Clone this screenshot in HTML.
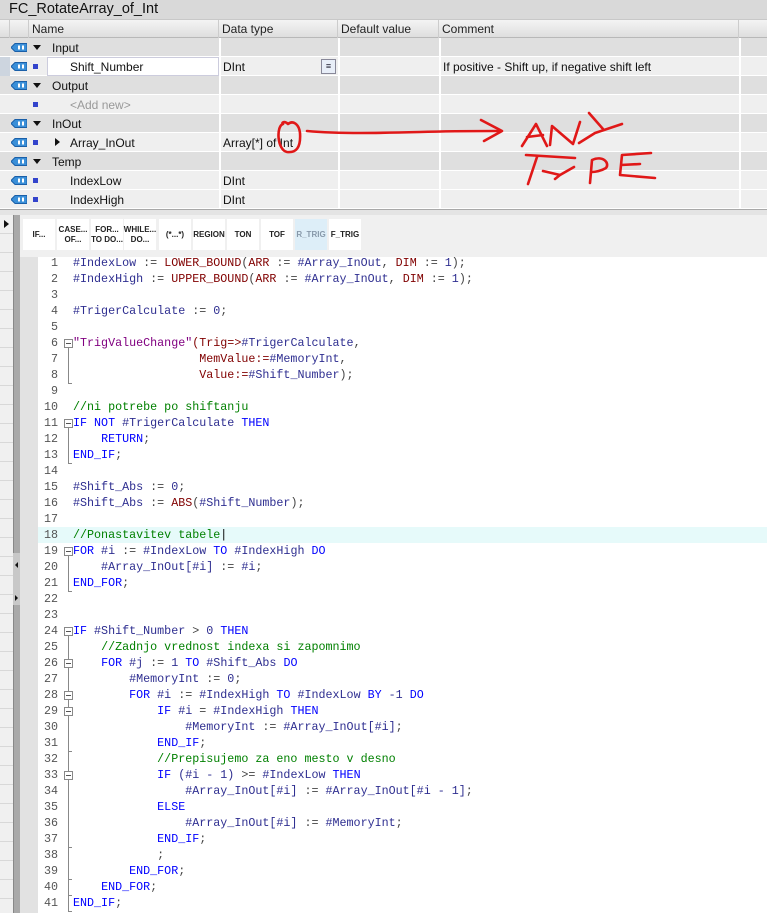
<!DOCTYPE html>
<html><head><meta charset="utf-8"><style>
*{margin:0;padding:0;box-sizing:border-box}
body{width:767px;height:913px;overflow:hidden;background:#fff;font-family:"Liberation Sans",sans-serif;position:relative}
.abs{position:absolute}
.title{left:0;top:0;width:767px;height:19px;background:#d9d9d9;font-size:14.5px;padding:0 0 0 9px;line-height:18px;color:#111}
.hdr{left:0;top:19px;width:767px;height:19px;background:linear-gradient(#f4f4f4,#dedede);border-top:1px solid #c8c8c8;border-bottom:1px solid #b8b8b8;font-size:12px;line-height:18px;color:#222}
.row{left:0;width:767px;height:19px;font-size:12px;line-height:20px;color:#111;border-bottom:1px solid #fff}
.g{background:#dfdfdf}.it{background:#efefef}
.cell{position:absolute;top:0;height:19px;border-right:2px solid #fff}
.ico{position:absolute;left:11px;top:5px;width:16px;height:9px}
.sq{position:absolute;left:33px;top:7px;width:5px;height:5px;background:#3344cc}
.tri{position:absolute;left:33px;top:7px;width:0;height:0;border-left:4px solid transparent;border-right:4px solid transparent;border-top:5px solid #111}
.code{font-family:"Liberation Mono",monospace;font-size:11.7px;white-space:pre;line-height:16px;color:#2e2e90}
.ln{position:absolute;left:20px;width:38px;text-align:right;font-family:"Liberation Mono",monospace;font-size:11.7px;color:#555;line-height:16px}
.k{color:#0000ff}.c{color:#008000}.f{color:#800000}.s{color:#800080}.o{color:#444}
.btn{position:absolute;top:219px;height:31px;background:#fff;font-size:8px;font-weight:bold;text-align:center;color:#222;display:flex;align-items:center;justify-content:center;line-height:10px}
.box{position:absolute;left:64px;width:9px;height:9px;border:1px solid #888;background:#fff}
.box:after{content:"";position:absolute;left:1px;top:3px;width:5px;height:1px;background:#555}
.vl{position:absolute;left:68px;width:1px;background:#888}
.tk{position:absolute;left:68px;width:4px;height:1px;background:#888}
</style></head><body>
<div class="abs title">FC_RotateArray_of_Int</div>
<div class="abs hdr">
<div class="cell" style="left:0;width:10px;border-right:1px solid #ccc"></div>
<div class="cell" style="left:10px;width:19px;border-right:1px solid #ccc"></div>
<div class="cell" style="left:29px;width:190px;border-right:1px solid #ccc;padding-left:3px">Name</div>
<div class="cell" style="left:219px;width:119px;border-right:1px solid #ccc;padding-left:3px">Data type</div>
<div class="cell" style="left:338px;width:101px;border-right:1px solid #ccc;padding-left:3px">Default value</div>
<div class="cell" style="left:439px;width:300px;border-right:1px solid #ccc;padding-left:3px">Comment</div>
</div>
<svg width="0" height="0" style="position:absolute"><defs><g id="tag"><path d="M0 4.5 L4 0.5 H16 V8.5 H4 Z" fill="#3a8fd8" stroke="#1a5fa8" stroke-width="1"/><rect x="7" y="2.5" width="2" height="4" fill="#fff"/><rect x="11" y="2.5" width="2" height="4" fill="#fff"/></g></defs></svg>

<div class="abs row g" style="top:38px"><svg class="ico"><use href="#tag"/></svg><div class="tri"></div><span class="abs" style="left:52px">Input</span><div class="cell" style="left:219px;width:0"></div><div class="cell" style="left:338px;width:0"></div><div class="cell" style="left:439px;width:0"></div><div class="cell" style="left:739px;width:0"></div></div>
<div class="abs row it" style="top:57px"><div class="abs" style="left:0;top:0;width:10px;height:19px;background:#cdd5df"></div><svg class="ico"><use href="#tag"/></svg><div class="sq"></div><div class="abs" style="left:47px;top:0;width:172px;height:19px;background:#fff;border:1px solid #ccd"></div><span class="abs" style="left:70px">Shift_Number</span><span class="abs" style="left:223px">DInt</span><div class="abs" style="left:321px;top:2px;width:15px;height:15px;border:1px solid #889;background:#e8eef8;font-size:9px;line-height:12px;text-align:center;color:#223">&#8801;</div><span class="abs" style="left:443px">If positive - Shift up, if negative shift left</span><div class="cell" style="left:219px;width:0"></div><div class="cell" style="left:338px;width:0"></div><div class="cell" style="left:439px;width:0"></div><div class="cell" style="left:739px;width:0"></div></div>
<div class="abs row g" style="top:76px"><svg class="ico"><use href="#tag"/></svg><div class="tri"></div><span class="abs" style="left:52px">Output</span><div class="cell" style="left:219px;width:0"></div><div class="cell" style="left:338px;width:0"></div><div class="cell" style="left:439px;width:0"></div><div class="cell" style="left:739px;width:0"></div></div>
<div class="abs row it" style="top:95px"><div class="sq"></div><span class="abs" style="left:70px;color:#999">&lt;Add new&gt;</span><div class="cell" style="left:219px;width:0"></div><div class="cell" style="left:338px;width:0"></div><div class="cell" style="left:439px;width:0"></div><div class="cell" style="left:739px;width:0"></div></div>
<div class="abs row g" style="top:114px"><svg class="ico"><use href="#tag"/></svg><div class="tri"></div><span class="abs" style="left:52px">InOut</span><div class="cell" style="left:219px;width:0"></div><div class="cell" style="left:338px;width:0"></div><div class="cell" style="left:439px;width:0"></div><div class="cell" style="left:739px;width:0"></div></div>
<div class="abs row it" style="top:133px"><svg class="ico"><use href="#tag"/></svg><div class="sq"></div><div class="abs" style="left:55px;top:5px;border-top:4px solid transparent;border-bottom:4px solid transparent;border-left:5px solid #111"></div><span class="abs" style="left:70px">Array_InOut</span><span class="abs" style="left:223px">Array[*] of Int</span><div class="cell" style="left:219px;width:0"></div><div class="cell" style="left:338px;width:0"></div><div class="cell" style="left:439px;width:0"></div><div class="cell" style="left:739px;width:0"></div></div>
<div class="abs row g" style="top:152px"><svg class="ico"><use href="#tag"/></svg><div class="tri"></div><span class="abs" style="left:52px">Temp</span><div class="cell" style="left:219px;width:0"></div><div class="cell" style="left:338px;width:0"></div><div class="cell" style="left:439px;width:0"></div><div class="cell" style="left:739px;width:0"></div></div>
<div class="abs row it" style="top:171px"><svg class="ico"><use href="#tag"/></svg><div class="sq"></div><span class="abs" style="left:70px">IndexLow</span><span class="abs" style="left:223px">DInt</span><div class="cell" style="left:219px;width:0"></div><div class="cell" style="left:338px;width:0"></div><div class="cell" style="left:439px;width:0"></div><div class="cell" style="left:739px;width:0"></div></div>
<div class="abs row it" style="top:190px"><svg class="ico"><use href="#tag"/></svg><div class="sq"></div><span class="abs" style="left:70px">IndexHigh</span><span class="abs" style="left:223px">DInt</span><div class="cell" style="left:219px;width:0"></div><div class="cell" style="left:338px;width:0"></div><div class="cell" style="left:439px;width:0"></div><div class="cell" style="left:739px;width:0"></div></div>
<div class="abs" style="left:0;top:209px;width:767px;height:6px;background:#e4e4e4;border-top:1px solid #a8a8a8"></div>

<div class="abs" style="left:0;top:215px;width:13px;height:698px;background:repeating-linear-gradient(#f0f0f0 0 18px,#d8d8d8 18px 19px)"></div>
<div class="abs" style="left:4px;top:220px;border-top:4px solid transparent;border-bottom:4px solid transparent;border-left:5px solid #111"></div>
<div class="abs" style="left:13px;top:215px;width:7px;height:698px;background:#a9a9a9;border-left:1px solid #888"></div>
<div class="abs" style="left:13px;top:553px;width:7px;height:52px;background:#c8c8c8"></div>
<div class="abs" style="left:15px;top:562px;border-top:3px solid transparent;border-bottom:3px solid transparent;border-right:3px solid #111"></div>
<div class="abs" style="left:15px;top:595px;border-top:3px solid transparent;border-bottom:3px solid transparent;border-left:3px solid #111"></div>
<div class="abs" style="left:20px;top:215px;width:747px;height:42px;background:#f0f0f0"></div>
<div class="abs" style="left:20px;top:257px;width:18px;height:656px;background:#e2e2e2"></div>

<div class="btn" style="left:23px;width:32px">IF...</div>
<div class="btn" style="left:57px;width:32px">CASE...<br>OF...</div>
<div class="btn" style="left:91px;width:32px">FOR...<br>TO DO...</div>
<div class="btn" style="left:124px;width:32px">WHILE...<br>DO...</div>
<div class="btn" style="left:159px;width:32px">(*...*)</div>
<div class="btn" style="left:193px;width:32px">REGION</div>
<div class="btn" style="left:227px;width:32px">TON</div>
<div class="btn" style="left:261px;width:32px">TOF</div>
<div class="btn" style="left:295px;width:32px;background:#ddeef8;color:#8899aa">R_TRIG</div>
<div class="btn" style="left:329px;width:32px">F_TRIG</div>

<div class="abs" style="left:38px;top:527px;width:729px;height:16px;background:#e6fafa"></div>

<div class="ln" style="top:255px">1<br>2<br>3<br>4<br>5<br>6<br>7<br>8<br>9<br>10<br>11<br>12<br>13<br>14<br>15<br>16<br>17<br>18<br>19<br>20<br>21<br>22<br>23<br>24<br>25<br>26<br>27<br>28<br>29<br>30<br>31<br>32<br>33<br>34<br>35<br>36<br>37<br>38<br>39<br>40<br>41</div>

<div class="vl" style="top:347px;height:36px"></div><div class="tk" style="top:383px"></div>
<div class="vl" style="top:427px;height:36px"></div><div class="tk" style="top:463px"></div>
<div class="vl" style="top:555px;height:36px"></div><div class="tk" style="top:591px"></div>
<div class="vl" style="top:635px;height:276px"></div><div class="tk" style="top:911px"></div>
<div class="tk" style="top:751px"></div><div class="tk" style="top:847px"></div><div class="tk" style="top:879px"></div><div class="tk" style="top:895px"></div>
<div class="box" style="top:339px"></div><div class="box" style="top:419px"></div><div class="box" style="top:547px"></div><div class="box" style="top:627px"></div><div class="box" style="top:659px"></div><div class="box" style="top:691px"></div><div class="box" style="top:707px"></div><div class="box" style="top:771px"></div>

<div class="abs code" style="left:73px;top:255px">#IndexLow <span class="o">:=</span> <span class="f">LOWER_BOUND</span><span class="o">(</span><span class="f">ARR</span> <span class="o">:=</span> #Array_InOut<span class="o">,</span> <span class="f">DIM</span> <span class="o">:=</span> 1<span class="o">);</span>
#IndexHigh <span class="o">:=</span> <span class="f">UPPER_BOUND</span><span class="o">(</span><span class="f">ARR</span> <span class="o">:=</span> #Array_InOut<span class="o">,</span> <span class="f">DIM</span> <span class="o">:=</span> 1<span class="o">);</span>

#TrigerCalculate <span class="o">:=</span> 0<span class="o">;</span>

<span class="s">"TrigValueChange"</span><span class="f">(Trig=&gt;</span>#TrigerCalculate<span class="o">,</span>
                  <span class="f">MemValue:=</span>#MemoryInt<span class="o">,</span>
                  <span class="f">Value:=</span>#Shift_Number<span class="o">);</span>

<span class="c">//ni potrebe po shiftanju</span>
<span class="k">IF NOT</span> #TrigerCalculate <span class="k">THEN</span>
    <span class="k">RETURN</span><span class="o">;</span>
<span class="k">END_IF</span><span class="o">;</span>

#Shift_Abs <span class="o">:=</span> 0<span class="o">;</span>
#Shift_Abs <span class="o">:=</span> <span class="f">ABS</span><span class="o">(</span>#Shift_Number<span class="o">);</span>

<span class="c">//Ponastavitev tabele</span><span style="color:#000">|</span>
<span class="k">FOR</span> #i <span class="o">:=</span> #IndexLow <span class="k">TO</span> #IndexHigh <span class="k">DO</span>
    #Array_InOut[#i] <span class="o">:=</span> #i<span class="o">;</span>
<span class="k">END_FOR</span><span class="o">;</span>


<span class="k">IF</span> #Shift_Number <span class="o">&gt;</span> 0 <span class="k">THEN</span>
    <span class="c">//Zadnjo vrednost indexa si zapomnimo</span>
    <span class="k">FOR</span> #j <span class="o">:=</span> 1 <span class="k">TO</span> #Shift_Abs <span class="k">DO</span>
        #MemoryInt <span class="o">:=</span> 0<span class="o">;</span>
        <span class="k">FOR</span> #i <span class="o">:=</span> #IndexHigh <span class="k">TO</span> #IndexLow <span class="k">BY</span> -1 <span class="k">DO</span>
            <span class="k">IF</span> #i <span class="o">=</span> #IndexHigh <span class="k">THEN</span>
                #MemoryInt <span class="o">:=</span> #Array_InOut[#i]<span class="o">;</span>
            <span class="k">END_IF</span><span class="o">;</span>
            <span class="c">//Prepisujemo za eno mesto v desno</span>
            <span class="k">IF</span> (#i - 1) <span class="o">&gt;=</span> #IndexLow <span class="k">THEN</span>
                #Array_InOut[#i] <span class="o">:=</span> #Array_InOut[#i - 1]<span class="o">;</span>
            <span class="k">ELSE</span>
                #Array_InOut[#i] <span class="o">:=</span> #MemoryInt<span class="o">;</span>
            <span class="k">END_IF</span><span class="o">;</span>
            <span class="o">;</span>
        <span class="k">END_FOR</span><span class="o">;</span>
    <span class="k">END_FOR</span><span class="o">;</span>
<span class="k">END_IF</span><span class="o">;</span></div>

<svg class="abs" style="left:0;top:0" width="767" height="913" fill="none" stroke="#e01818" stroke-width="2.6" stroke-linecap="round" stroke-linejoin="round">
<path d="M283 124 C276 126 277 150 287 152 C296 153 301 148 300 133 C299 124 293 120 288 124 C285 121 281 122 283 124"/>
<path d="M307 131 C340 134 380 133 420 132 C450 131 480 131 501 131"/>
<path d="M481 120 L502 131 L484 141"/>
<path d="M522 146 L536 124 L547 146 M527 137 L543 135"/>
<path d="M550 145 L552 126 L573 144 L580 122"/>
<path d="M589 113 L603 129 M622 124 L595 133 L579 143"/>
<path d="M526 155 L575 158 M537 157 L528 184"/>
<path d="M543 171 L560 175 L574 167 M555 179 L560 175"/>
<path d="M590 183 L592 160 C603 155 610 163 606 168 C601 171 595 172 592 172"/>
<path d="M651 153 L622 155 L620 175 L655 178 M621 165 L640 164"/>
</svg>
</body></html>
